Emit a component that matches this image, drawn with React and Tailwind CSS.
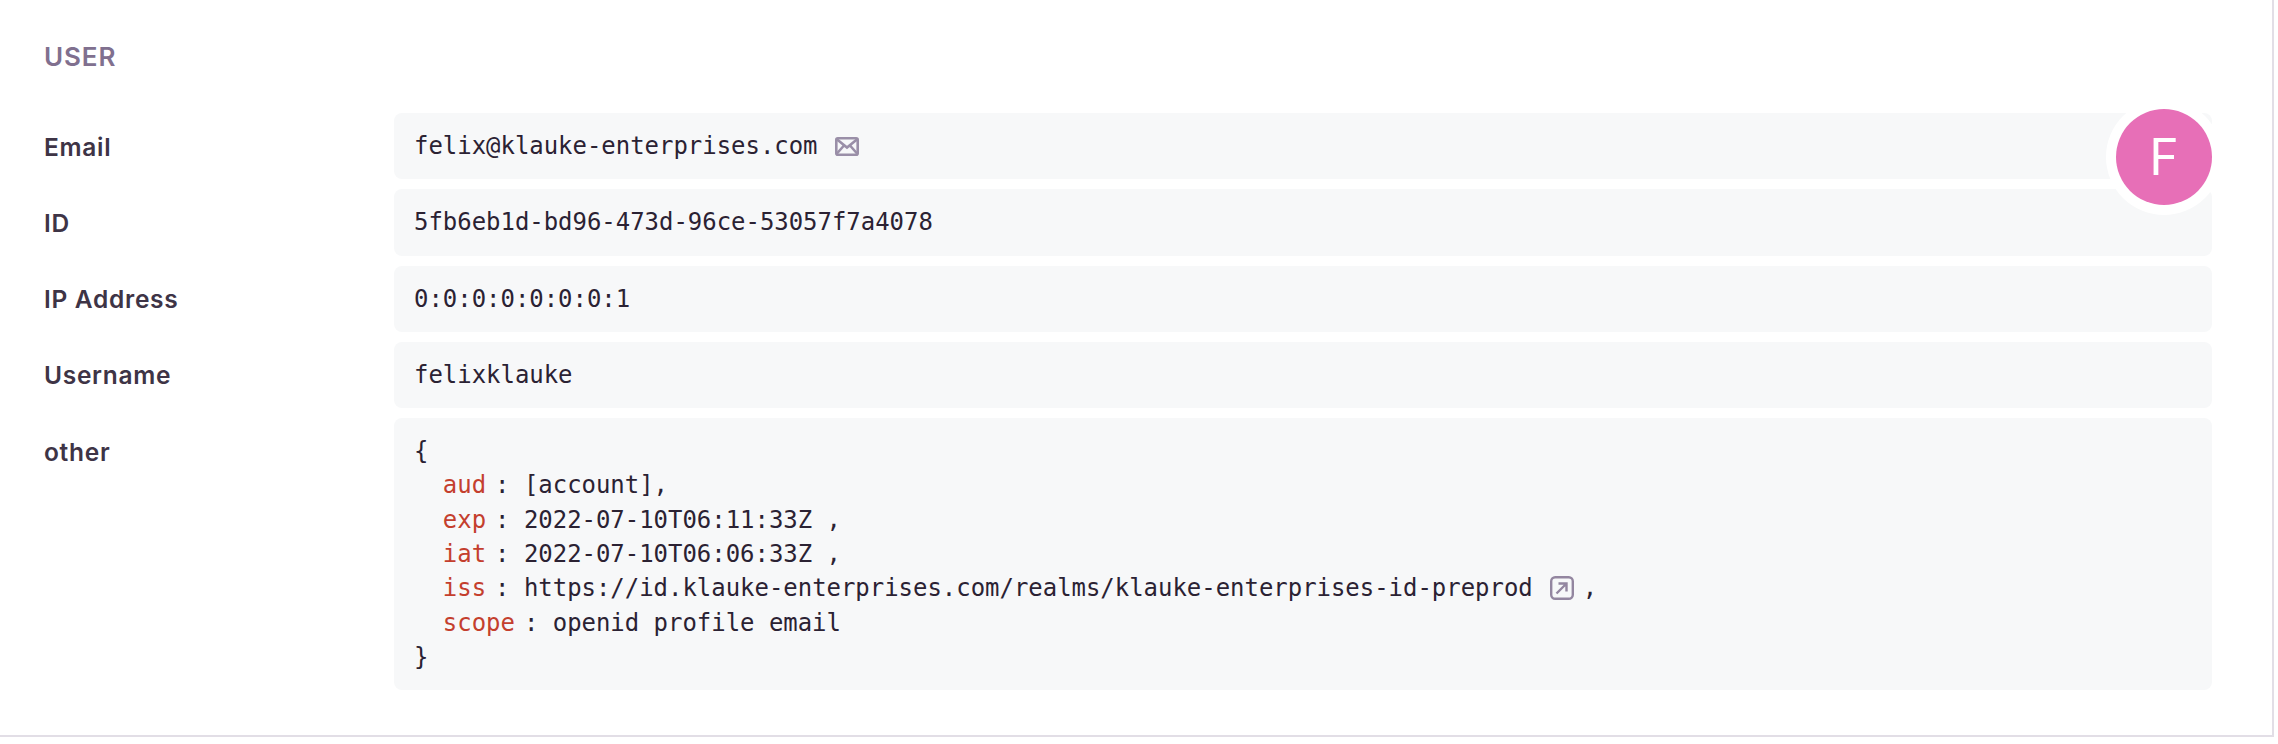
const mono = "font-['DejaVu_Sans_Mono',monospace]";

function MailIcon() {
  return (
    <svg width="24" height="19" viewBox="0 0 24 19" fill="none" stroke="#9a8fa8" strokeWidth="2.6" className="inline-block ml-[17px] align-[-2px]">
      <rect x="1.3" y="1.3" width="21.4" height="16.4" rx="1.5" />
      <path d="M1.5 2 12 10.5 22.5 2M1.5 17 9 8.5M22.5 17 15 8.5" />
    </svg>
  );
}

function LinkIcon() {
  return (
    <svg width="24" height="24" viewBox="0 0 24 24" fill="none" stroke="#9386a0" strokeWidth="2.4" className="inline-block ml-[17px] mr-[9px] align-[-4px]">
      <rect x="1.2" y="1.2" width="21.6" height="21.6" rx="4" />
      <path d="M6.5 17.5 16.5 7.5M8.5 7.5H16.5V15.5" />
    </svg>
  );
}

function Row({ label, children }) {
  return (
    <div className="flex">
      <div className="w-[350px] shrink-0 pt-[16.5px] text-[24.5px] leading-[34px] font-semibold text-[#3e3446] font-['Inter',sans-serif] tracking-[0.7px]">{label}</div>
      <div className={`flex-1 rounded-[8px] bg-[#f7f8f9] px-5 py-4 text-[23.95px] leading-[34.3px] text-[#2b2233] whitespace-pre ${mono}`}>{children}</div>
    </div>
  );
}

const Key = ({ children }) => <span className="mr-[9px] text-[#c43f2e]">{children}</span>;

export default function App() {
  return (
    <div className="h-[737px] w-[2274px] bg-white border-r-2 border-b-2 border-[#e2dee6] pl-[44px] pr-[60px] pt-[40px]">
      <h3 className="text-[26px] leading-[34px] font-semibold text-[#80708f] font-['Inter',sans-serif] tracking-[0.9px] uppercase">User</h3>
      <div className="relative mt-[39px] flex flex-col gap-[10px]">
        <div className="absolute right-0 top-[-4px] z-10 flex h-[96px] w-[96px] items-center justify-center rounded-full bg-[#e76fb7] text-[50px] text-white font-['Inter',sans-serif] shadow-[0_0_0_10px_#ffffff]">F</div>
        <Row label="Email">felix@klauke-enterprises.com<MailIcon /></Row>
        <Row label="ID">5fb6eb1d-bd96-473d-96ce-53057f7a4078</Row>
        <Row label="IP Address">0:0:0:0:0:0:0:1</Row>
        <Row label="Username">felixklauke</Row>
        <Row label="other">
          <div>{"{"}</div>
          <div>{"  "}<Key>aud</Key>: [account],</div>
          <div>{"  "}<Key>exp</Key>: 2022-07-10T06:11:33Z ,</div>
          <div>{"  "}<Key>iat</Key>: 2022-07-10T06:06:33Z ,</div>
          <div>{"  "}<Key>iss</Key>: https://id.klauke-enterprises.com/realms/klauke-enterprises-id-preprod<LinkIcon />,</div>
          <div>{"  "}<Key>scope</Key>: openid profile email</div>
          <div>{"}"}</div>
        </Row>
      </div>
    </div>
  );
}
